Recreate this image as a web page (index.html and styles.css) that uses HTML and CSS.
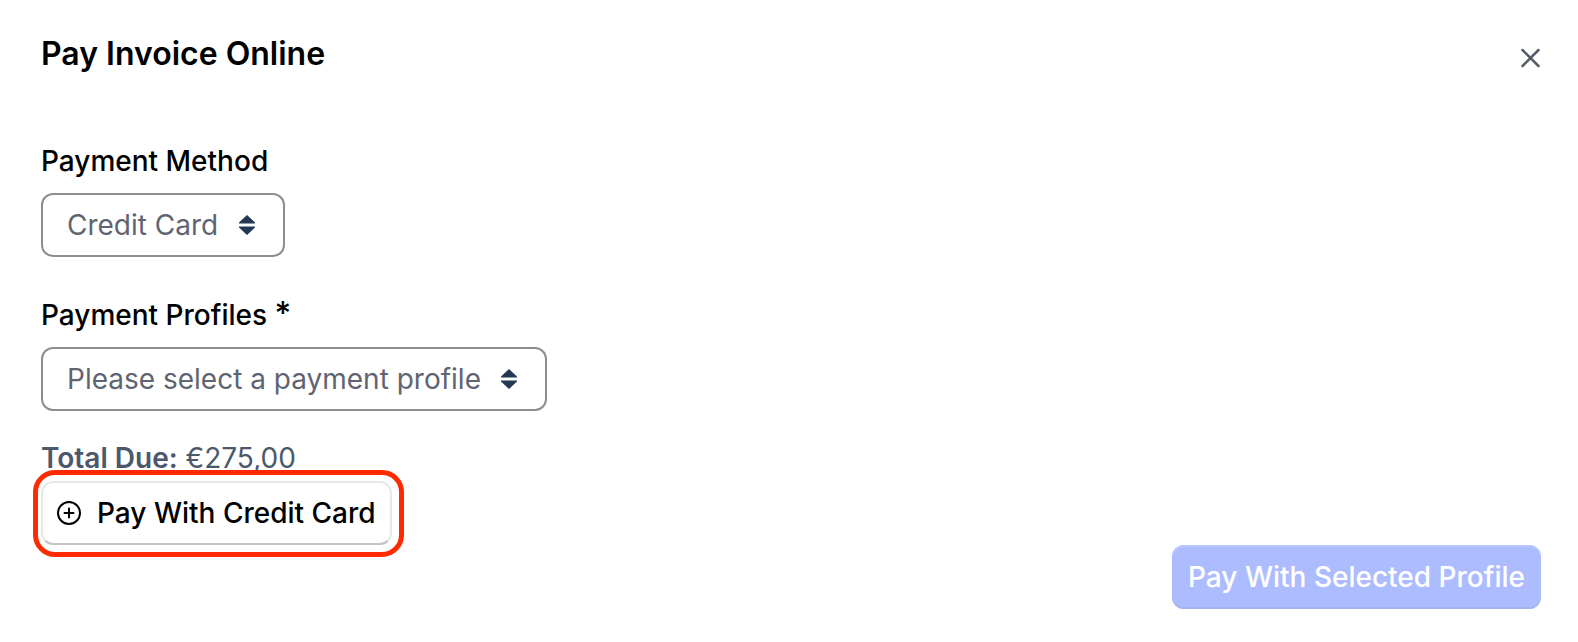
FILE: index.html
```
<!DOCTYPE html>
<html lang="en">
<head>
    <meta charset="UTF-8">
    <meta name="viewport" content="width=device-width, initial-scale=1.0">
    <title>Pay Invoice Online</title>
    <link rel="stylesheet" href="styles.css">
</head>
<body>
    <main class="dialog">
        <header class="dialog-header">
            <h1>Pay Invoice Online</h1>
            <button class="close" type="button" aria-label="Close">
                <svg width="20" height="20" viewBox="0 0 20 20" fill="none" stroke="currentColor" stroke-width="2.5" stroke-linecap="round">
                    <path d="M1.5 2l16 16M17.5 2l-16 16"/>
                </svg>
            </button>
        </header>

        <form>
            <div class="field">
                <label for="payment-method">Payment Method</label>
                <div class="select">
                    <select id="payment-method">
                        <option>Credit Card</option>
                    </select>
                    <svg width="16" height="20" viewBox="0 0 16 20" fill="currentColor">
                        <path d="M8 0l8 7.5v1H0v-1zM8 20l8-7.5v-1H0v1z"/>
                    </svg>
                </div>
            </div>

            <div class="field">
                <label for="payment-profile">Payment Profiles <span class="required">*</span></label>
                <div class="select">
                    <select id="payment-profile" required>
                        <option>Please select a payment profile</option>
                    </select>
                    <svg width="16" height="20" viewBox="0 0 16 20" fill="currentColor">
                        <path d="M8 0l8 7.5v1H0v-1zM8 20l8-7.5v-1H0v1z"/>
                    </svg>
                </div>
            </div>

            <p class="total"><strong>Total Due:</strong> €275,00</p>

            <button class="btn btn-card" type="button">
                <svg width="24" height="24" viewBox="0 0 24 24" fill="none" stroke="currentColor" stroke-width="2" stroke-linecap="round">
                    <circle cx="12" cy="12" r="11"/>
                    <path d="M12 7.5v9M7.5 12h9"/>
                </svg>
                Pay With Credit Card
            </button>

            <div class="actions">
                <button class="btn btn-primary" type="submit" disabled>Pay With Selected Profile</button>
            </div>
        </form>
    </main>
</body>
</html>
```
FILE: styles.css
```
* {
    box-sizing: border-box;
}
body {
    margin: 0;
    background: #fff;
    color: #000;
    font-family: Inter, sans-serif;
    font-size: 28px;
    line-height: 40px;
}
.dialog {
    padding: 34px 37px 32px 41px;
}
.dialog-header {
    display: flex;
    justify-content: space-between;
    margin-bottom: 67px;
}
h1 {
    margin: 0;
    font-size: 32px;
    font-weight: 600;
    line-height: 40px;
}
.close {
    display: flex;
    margin-top: 14px;
    padding: 0;
    border: none;
    background: none;
    color: #575c69;
    cursor: pointer;
}
.field {
    display: flex;
    flex-direction: column;
    align-items: flex-start;
    gap: 12px;
    margin-bottom: 38px;
}
.field label {
    font-weight: 500;
}
.required {
    font-size: 32px;
    line-height: 1;
}
.select {
    display: grid;
    align-items: center;
}
.select select,
.select svg {
    grid-area: 1 / 1;
}
.select select {
    appearance: none;
    height: 64px;
    padding: 0 64px 0 24px;
    border: 2px solid #8e8e8e;
    border-radius: 12px;
    background: #fff;
    color: #5f6471;
    font: inherit;
}
.select svg {
    justify-self: end;
    margin-right: 30px;
    color: #233852;
    pointer-events: none;
}
.total {
    margin: -11px 0 3px;
    color: #4b586b;
}
.total strong {
    font-weight: 600;
}
.btn {
    display: flex;
    align-items: center;
    height: 64px;
    padding: 0 16px;
    border: none;
    border-radius: 12px;
    font: inherit;
    font-weight: 500;
    cursor: pointer;
}
.btn-card {
    position: relative;
    gap: 16px;
    border: 2px solid #e8e8e8;
    border-bottom-color: #c4c4c4;
    padding: 0 14px;
    background: #fff;
    color: #000;
}
/* highlight ring around the button */
.btn-card::after {
    content: "";
    position: absolute;
    inset: -13px -14px -14px -10px;
    border: 5px solid #ff2a00;
    border-radius: 22px;
    pointer-events: none;
}
.actions {
    display: flex;
    justify-content: flex-end;
}
.btn-primary {
    background: #adbcff;
    color: #fff;
    box-shadow: inset 0 2px 0 #b9c5ff, inset 0 -2px 0 #a6b3ed;
    cursor: default;
}
```
